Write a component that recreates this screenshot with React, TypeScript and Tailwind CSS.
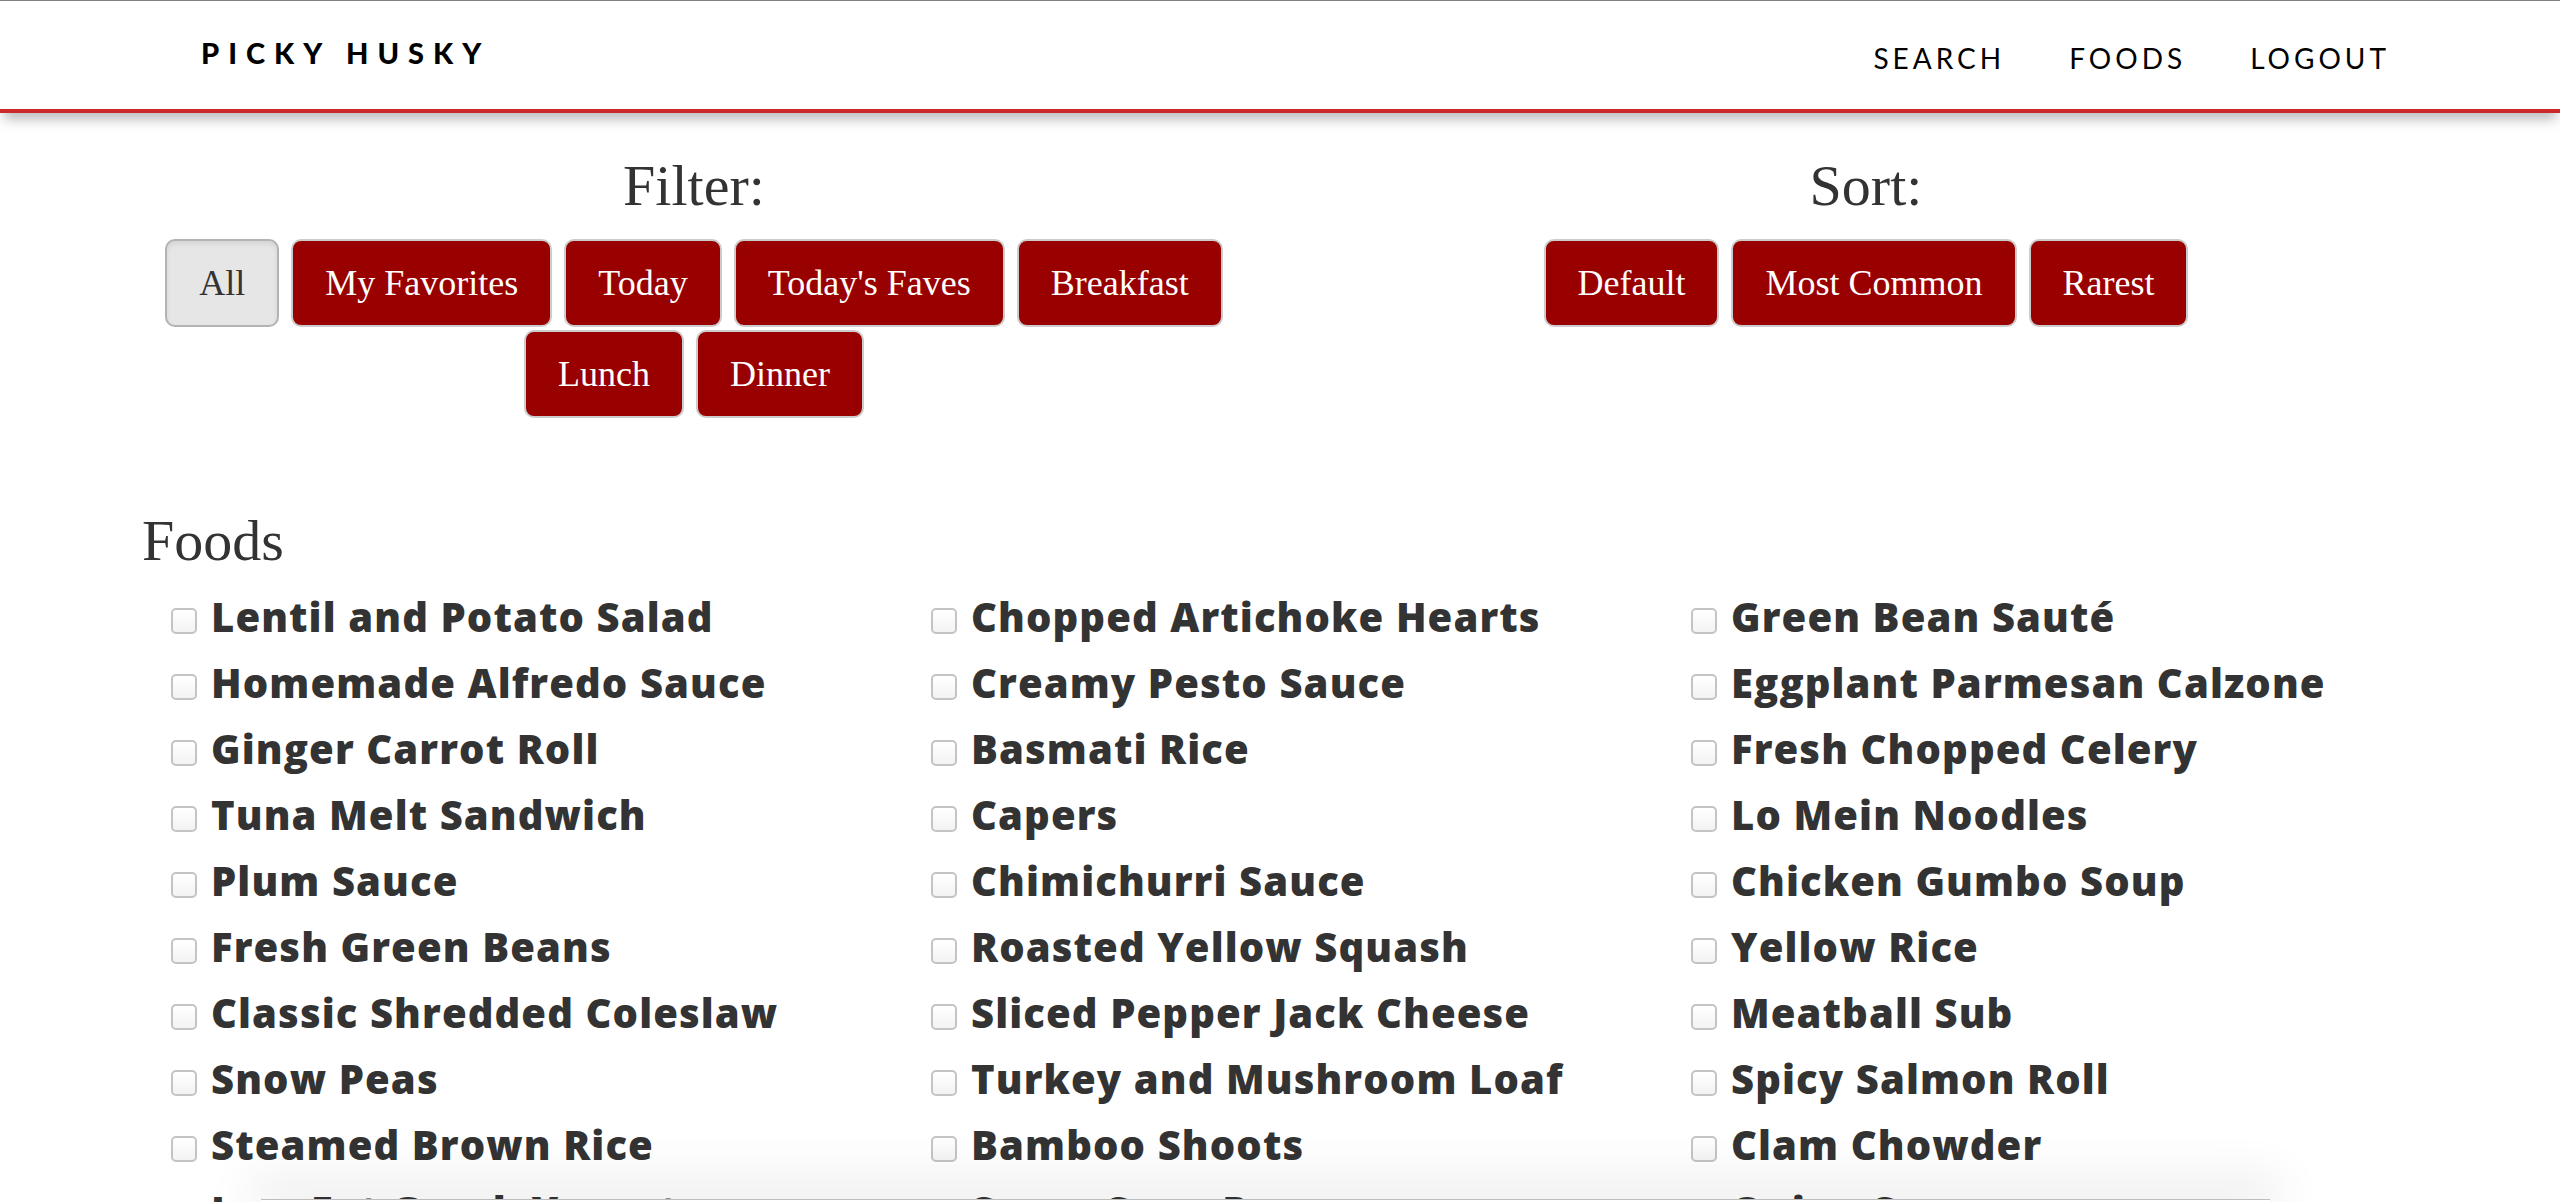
import React from "react";

const filters = ["All", "My Favorites", "Today", "Today's Faves", "Breakfast", "Lunch", "Dinner"];
const sorts = ["Default", "Most Common", "Rarest"];

const columns = [
  [
    "Lentil and Potato Salad",
    "Homemade Alfredo Sauce",
    "Ginger Carrot Roll",
    "Tuna Melt Sandwich",
    "Plum Sauce",
    "Fresh Green Beans",
    "Classic Shredded Coleslaw",
    "Snow Peas",
    "Steamed Brown Rice",
    "Low Fat Greek Yogurt",
  ],
  [
    "Chopped Artichoke Hearts",
    "Creamy Pesto Sauce",
    "Basmati Rice",
    "Capers",
    "Chimichurri Sauce",
    "Roasted Yellow Squash",
    "Sliced Pepper Jack Cheese",
    "Turkey and Mushroom Loaf",
    "Bamboo Shoots",
    "Sugar Snap Peas",
  ],
  [
    "Green Bean Sauté",
    "Eggplant Parmesan Calzone",
    "Fresh Chopped Celery",
    "Lo Mein Noodles",
    "Chicken Gumbo Soup",
    "Yellow Rice",
    "Meatball Sub",
    "Spicy Salmon Roll",
    "Clam Chowder",
    "Onion Soup",
  ],
];

function PillButton({ label, active }: { label: string; active?: boolean }) {
  return (
    <button
      className={
        active
          ? "h-[88px] rounded-[10px] border-2 border-[#b3b3b3] bg-[#e6e6e6] px-[32px] text-[36px] text-[#333] shadow-[inset_0_3px_5px_rgba(0,0,0,0.08)]"
          : "h-[88px] rounded-[10px] border-2 border-[#cccccc] bg-[#990000] px-[32px] text-[36px] text-white"
      }
    >
      {label}
    </button>
  );
}

function FoodItem({ name }: { name: string }) {
  return (
    <div className="h-[66px] whitespace-nowrap leading-[66px]">
      <span className="mr-[14px] inline-block h-[26px] w-[26px] translate-y-[2px] rounded-[5px] border-2 border-[#c4c4c4] bg-gradient-to-b from-white to-[#f3f3f3]" />
      <span className="text-[40px] font-extrabold tracking-[1.1px] text-[#333]">{name}</span>
    </div>
  );
}

export default function App() {
  return (
    <div className="min-h-screen bg-white font-['Liberation_Serif',serif]">
      <header className="relative z-10 h-[113px] border-t border-[#808080] border-b-4 border-b-[#cc2a2a] bg-white shadow-[0_10px_12px_-4px_rgba(0,0,0,0.28)]">
        <div className="flex items-start justify-between pl-[201px] pr-[170px] font-['Lato',sans-serif] text-black">
          <div className="pt-[30px] text-[29px] font-black tracking-[9px]">PICKY HUSKY</div>
          <nav className="flex gap-[64px] pt-[36px] text-[28px] tracking-[4px]">
            <a>SEARCH</a>
            <a>FOODS</a>
            <a>LOGOUT</a>
          </nav>
        </div>
      </header>

      <section className="flex px-[108px] pt-[40px]">
        <div className="flex flex-1 flex-col items-center">
          <h2 className="text-[58px] leading-[66px] text-[#333]">Filter:</h2>
          <div className="mt-[20px] flex max-w-[1100px] flex-wrap justify-center gap-x-[12px] gap-y-[3px]">
            {filters.map((f) => (
              <PillButton key={f} label={f} active={f === "All"} />
            ))}
          </div>
        </div>
        <div className="flex flex-1 flex-col items-center">
          <h2 className="text-[58px] leading-[66px] text-[#333]">Sort:</h2>
          <div className="mt-[20px] flex flex-wrap justify-center gap-x-[12px]">
            {sorts.map((s) => (
              <PillButton key={s} label={s} />
            ))}
          </div>
        </div>
      </section>

      <section className="pl-[142px] pt-[90px]">
        <h2 className="text-[58px] leading-[66px] text-[#333]">Foods</h2>
        <div className="mt-[10px] flex pl-[29px] font-['Open_Sans',sans-serif]">
          {columns.map((col, i) => (
            <div key={i} className="w-[760px]">
              {col.map((name) => (
                <FoodItem key={name} name={name} />
              ))}
            </div>
          ))}
        </div>
      </section>

      <div className="fixed bottom-0 left-[261px] z-20 h-[3px] w-[2009px] border-t border-[#bdbdbd] bg-white shadow-[0_-6px_50px_10px_rgba(0,0,0,0.12)]" />
    </div>
  );
}
